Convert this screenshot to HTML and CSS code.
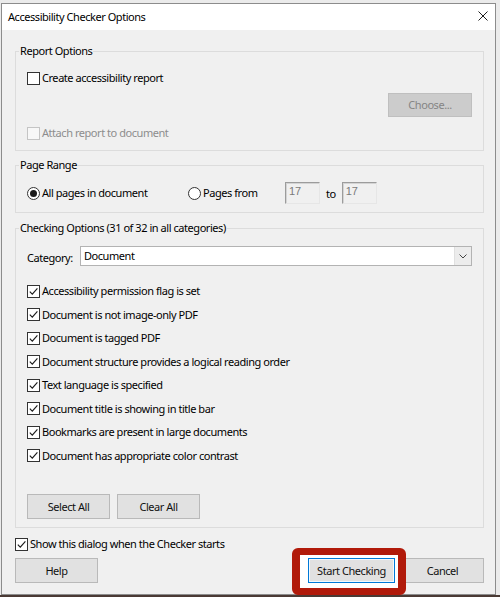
FILE: index.html
```html
<!DOCTYPE html>
<html>
<head>
<meta charset="utf-8">
<title>Accessibility Checker Options</title>
<link rel="stylesheet" href="styles.css">
</head>
<body>
<div class="screen">
  <div class="dialog">
    <div class="titlebar">
      <span class="title">Accessibility Checker Options</span>
      <span class="close"><svg width="10" height="10" viewBox="0 0 10 10"><path d="M0.5 0.5 L9.5 9.5 M9.5 0.5 L0.5 9.5" stroke="#1e1e1e" stroke-width="1" fill="none"/></svg></span>
    </div>
    <div class="content">
      <fieldset class="group report">
        <legend>Report Options</legend>
        <div class="gbody report-body">
          <div class="check"><span class="box"></span><span>Create accessibility report</span></div>
          <div class="choose-row"><span class="btn btn-disabled choose">Choose...</span></div>
          <div class="check disabled"><span class="box"></span><span>Attach report to document</span></div>
        </div>
      </fieldset>

      <fieldset class="group range">
        <legend>Page Range</legend>
        <div class="gbody range-body">
          <div class="radio-item first"><span class="radio on"></span><span>All pages in document</span></div>
          <div class="radio-item second"><span class="radio"></span><span>Pages from</span></div>
          <span class="num">17</span>
          <span class="to">to</span>
          <span class="num">17</span>
        </div>
      </fieldset>

      <fieldset class="group checking">
        <legend>Checking Options (31 of 32 in all categories)</legend>
        <div class="gbody checking-body">
          <div class="category-row">
            <span class="cat-label">Category:</span>
            <div class="select">
              <span class="select-value">Document</span>
              <span class="select-arrow"><svg width="8" height="5" viewBox="0 0 8 5"><path d="M0.5 0.5 L4 4 L7.5 0.5" stroke="#444" stroke-width="1" fill="none"/></svg></span>
            </div>
          </div>
          <div class="check-list">
            <div class="check"><span class="box"><svg viewBox="0 0 11 11"><path d="M1.8 5.6 L4.3 8.2 L9.4 2.4" fill="none" stroke="#1a1a1a" stroke-width="1.15"/></svg></span><span>Accessibility permission flag is set</span></div>
            <div class="check"><span class="box"><svg viewBox="0 0 11 11"><path d="M1.8 5.6 L4.3 8.2 L9.4 2.4" fill="none" stroke="#1a1a1a" stroke-width="1.15"/></svg></span><span>Document is not image-only PDF</span></div>
            <div class="check"><span class="box"><svg viewBox="0 0 11 11"><path d="M1.8 5.6 L4.3 8.2 L9.4 2.4" fill="none" stroke="#1a1a1a" stroke-width="1.15"/></svg></span><span>Document is tagged PDF</span></div>
            <div class="check"><span class="box"><svg viewBox="0 0 11 11"><path d="M1.8 5.6 L4.3 8.2 L9.4 2.4" fill="none" stroke="#1a1a1a" stroke-width="1.15"/></svg></span><span>Document structure provides a logical reading order</span></div>
            <div class="check"><span class="box"><svg viewBox="0 0 11 11"><path d="M1.8 5.6 L4.3 8.2 L9.4 2.4" fill="none" stroke="#1a1a1a" stroke-width="1.15"/></svg></span><span>Text language is specified</span></div>
            <div class="check"><span class="box"><svg viewBox="0 0 11 11"><path d="M1.8 5.6 L4.3 8.2 L9.4 2.4" fill="none" stroke="#1a1a1a" stroke-width="1.15"/></svg></span><span>Document title is showing in title bar</span></div>
            <div class="check"><span class="box"><svg viewBox="0 0 11 11"><path d="M1.8 5.6 L4.3 8.2 L9.4 2.4" fill="none" stroke="#1a1a1a" stroke-width="1.15"/></svg></span><span>Bookmarks are present in large documents</span></div>
            <div class="check"><span class="box"><svg viewBox="0 0 11 11"><path d="M1.8 5.6 L4.3 8.2 L9.4 2.4" fill="none" stroke="#1a1a1a" stroke-width="1.15"/></svg></span><span>Document has appropriate color contrast</span></div>
          </div>
          <div class="btn-row">
            <span class="btn">Select All</span>
            <span class="btn">Clear All</span>
          </div>
        </div>
      </fieldset>

      <div class="check show-row"><span class="box"><svg viewBox="0 0 11 11"><path d="M1.8 5.6 L4.3 8.2 L9.4 2.4" fill="none" stroke="#1a1a1a" stroke-width="1.15"/></svg></span><span>Show this dialog when the Checker starts</span></div>

      <div class="footer">
        <span class="btn">Help</span>
        <span class="spacer"></span>
        <span class="btn btn-default">Start Checking</span>
        <span class="btn">Cancel</span>
      </div>
    </div>
    <div class="highlight"></div>
  </div>
</div>
</body>
</html>
```

FILE: styles.css
```css
* { box-sizing: border-box; }

html, body { margin: 0; padding: 0; }

body {
  width: 500px;
  height: 597px;
  overflow: hidden;
  background: linear-gradient(#ebebeb 0, #ebebeb 595px, #4a3a34 595px);
  font-family: "Noto Sans", "Open Sans", sans-serif;
  font-size: 11px;
  letter-spacing: -0.45px;
  color: #000;
}

.screen {
  padding: 3px 0 0 1px;
}

.dialog {
  position: relative;
  width: 495px;
  height: 592px;
  border: 1px solid #8c8c8c;
  background: #f0f0f0;
  display: flex;
  flex-direction: column;
}

.titlebar {
  height: 26px;
  background: #fff;
  display: flex;
  align-items: center;
  justify-content: space-between;
  padding: 0 7px 0 6px;
}

.title { line-height: 16px; }

.close { display: flex; margin-top: -2px; }

.content {
  padding: 13px 11px 0 13px;
  display: flex;
  flex-direction: column;
}

.group {
  margin: 0;
  padding: 0;
  border: 1px solid #dcdcdc;
  min-width: 0;
}

.group legend {
  padding: 0 1px;
  margin-left: 3px;
  line-height: 16px;
  height: 16px;
}

.gbody {
  padding: 0 11px 8px 11px;
}

.report-body { padding-top: 10px; }

.check {
  display: flex;
  align-items: center;
  height: 18px;
  line-height: 16px;
}

.box {
  width: 13px;
  height: 13px;
  border: 1px solid #333;
  background: #fff;
  margin-right: 2px;
  flex: none;
  display: flex;
}

.box svg { width: 11px; height: 11px; }

.check.disabled { color: #8d8d8d; }
.check.disabled .box { border-color: #c4c4c4; background: #f7f7f7; }

.choose-row {
  display: flex;
  justify-content: flex-end;
  margin-top: 6px;
}

.report-body .check.disabled { margin-top: 7px; }

.btn {
  display: inline-flex;
  align-items: center;
  justify-content: center;
  width: 83px;
  height: 25px;
  background: #e1e1e1;
  border: 1px solid #b9b9b9;
  line-height: 16px;
  color: #111;
}

.btn-disabled {
  background: #cccccc;
  border-color: #bfbfbf;
  color: #858585;
}

.choose { width: 84px; height: 24px; }

.range { margin-top: 6px; }

.range-body {
  padding-top: 9px;
  display: flex;
  align-items: center;
  height: 22px;
  box-sizing: content-box;
}

.radio-item {
  display: flex;
  align-items: center;
  line-height: 16px;
}

.radio-item.first { width: 161px; }
.radio-item.second { width: 97px; }

.radio {
  width: 13px;
  height: 13px;
  border: 1px solid #333;
  border-radius: 50%;
  background: #fff;
  margin-right: 2px;
  display: flex;
  align-items: center;
  justify-content: center;
  flex: none;
}

.radio.on::after {
  content: "";
  width: 7px;
  height: 7px;
  border-radius: 50%;
  background: #1a1a1a;
}

.num {
  width: 35px;
  height: 22px;
  border: 1px solid;
  border-color: #9c9c9c #e6e6e6 #e6e6e6 #9c9c9c;
  box-shadow: inset 1px 1px 0 #d4d4d4;
  font-family: "Liberation Sans", Arial, sans-serif;
  font-size: 11px;
  letter-spacing: 0;
  color: #7a7a7a;
  padding: 1px 0 0 3px;
  line-height: 15px;
}

.to { margin: 0 6px; }

.checking { margin-top: 7px; }

.checking-body { padding-top: 10px; }

.category-row {
  display: flex;
  align-items: center;
  height: 20px;
}

.cat-label { width: 53px; padding-top: 3px; }

.select {
  flex: 1;
  height: 20px;
  border: 1px solid #b3b3b3;
  background: #fff;
  display: flex;
  align-items: center;
}

.select-value { flex: 1; padding-left: 3px; line-height: 16px; }

.select-arrow {
  width: 17px;
  height: 18px;
  background: #ececec;
  border-left: 1px solid #e0e0e0;
  display: flex;
  align-items: center;
  justify-content: center;
}

.check-list {
  margin-top: 16px;
  display: flex;
  flex-direction: column;
  gap: 5.5px;
}

.btn-row {
  margin-top: 29.5px;
  display: flex;
  gap: 7px;
}

.show-row {
  margin-top: 7px;
}

.footer {
  margin-top: 5px;
  display: flex;
  align-items: center;
  gap: 6px;
}

.spacer { flex: 1; }

.btn-default {
  position: relative;
  z-index: 2;
  width: 87px;
  border-color: #0078d7;
  box-shadow: inset 0 0 0 1px #f2f8fd;
}

.highlight {
  position: absolute;
  left: 290px;
  top: 544px;
  width: 114px;
  height: 47px;
  border: 8px solid #b11a0a;
  border-top-width: 7px;
  border-bottom-width: 7px;
  border-radius: 6px;
  background: #fff;
  z-index: 1;
}
```
